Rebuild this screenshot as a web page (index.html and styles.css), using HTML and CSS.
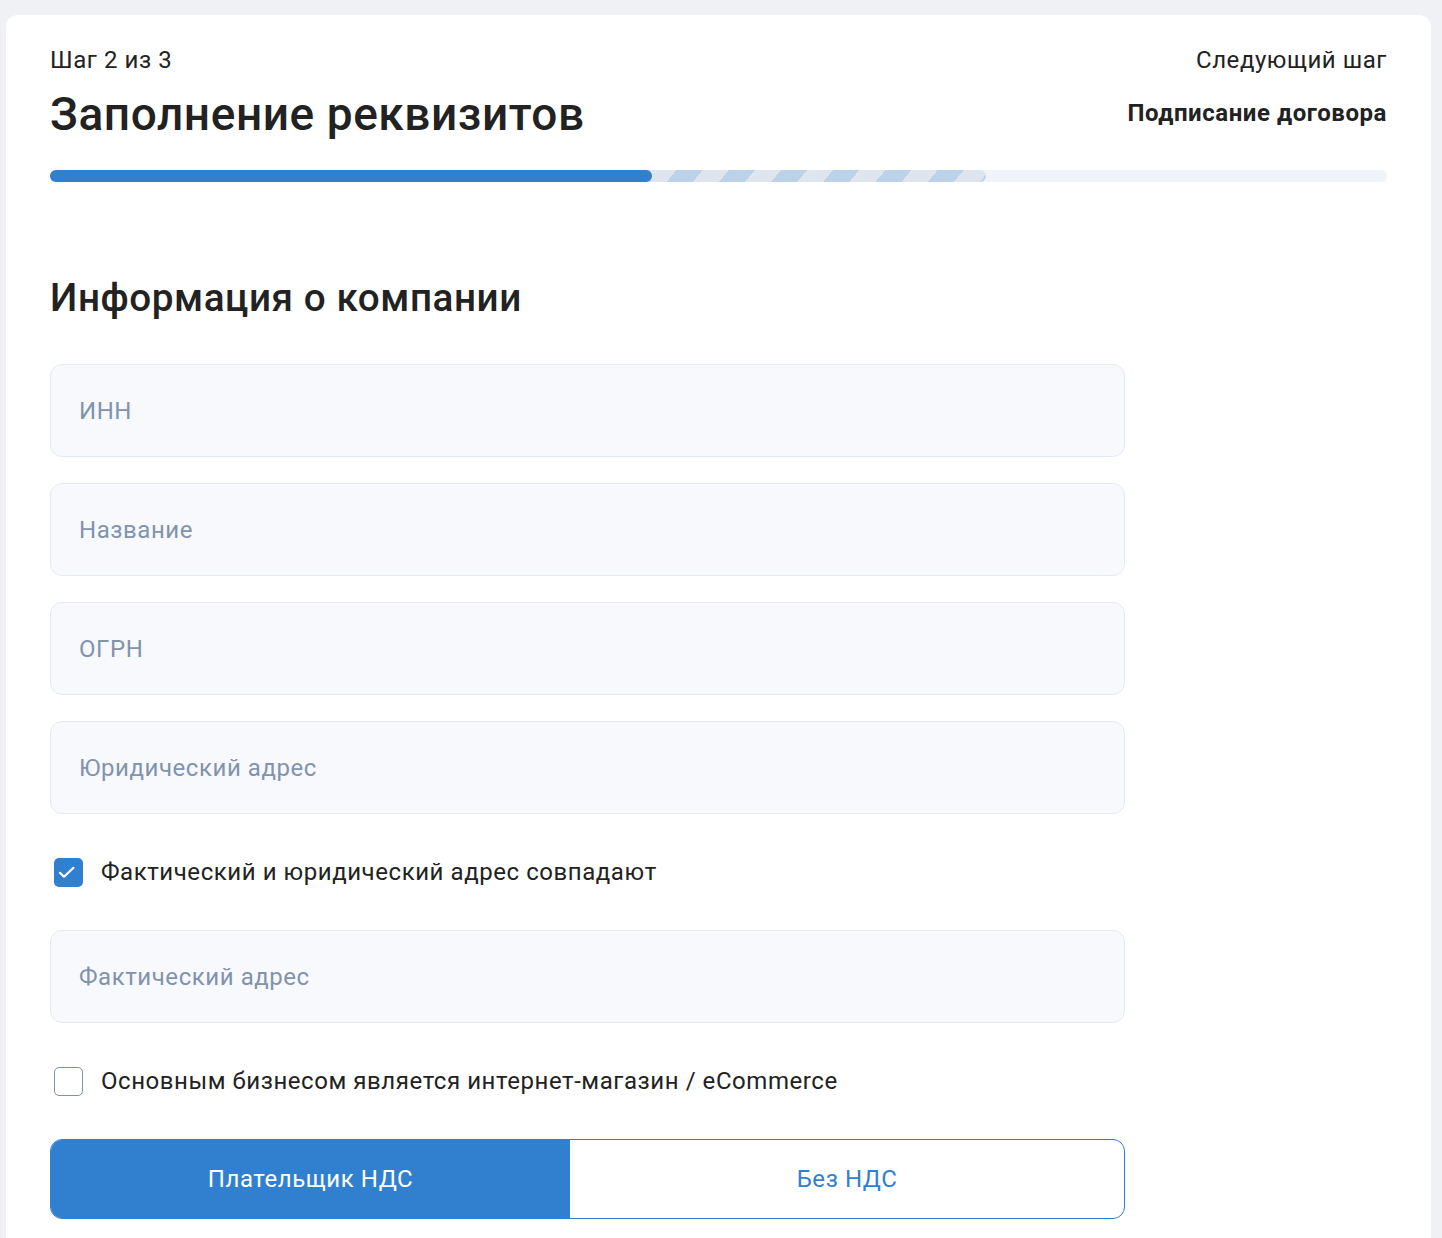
FILE: index.html
```html
<!DOCTYPE html>
<html lang="ru">
<head>
<meta charset="utf-8">
<title>Заполнение реквизитов</title>
<link rel="stylesheet" href="styles.css">
</head>
<body>
<div class="card">
  <div class="header">
    <div class="header-left">
      <div class="step">Шаг 2 из 3</div>
      <h1 class="title">Заполнение реквизитов</h1>
    </div>
    <div class="header-right">
      <div class="next-label">Следующий шаг</div>
      <div class="next-name">Подписание договора</div>
    </div>
  </div>
  <div class="progress">
    <div class="progress-current"></div>
    <div class="progress-done"></div>
  </div>

  <h2 class="section-title">Информация о компании</h2>

  <div class="form">
    <div class="field">ИНН</div>
    <div class="field">Название</div>
    <div class="field">ОГРН</div>
    <div class="field">Юридический адрес</div>
    <div class="check">
      <span class="box box-checked">
        <svg viewBox="0 0 29 29" width="29" height="29"><path d="M6 14.8l4 3.9L19.5 9.8" fill="none" stroke="#fff" stroke-width="2.2" stroke-linecap="round" stroke-linejoin="round"/></svg>
      </span>
      <span class="check-text">Фактический и юридический адрес совпадают</span>
    </div>
    <div class="field">Фактический адрес</div>
    <div class="check">
      <span class="box"></span>
      <span class="check-text">Основным бизнесом является интернет-магазин / eCommerce</span>
    </div>
    <div class="segmented">
      <div class="seg seg-active">Плательщик НДС</div>
      <div class="seg">Без НДС</div>
    </div>
  </div>
</div>
</body>
</html>
```

FILE: styles.css
```css
* { box-sizing: border-box; }
html, body { margin: 0; padding: 0; }
body {
  background: #eff1f5;
  font-family: Roboto, "Noto Sans", Arial, sans-serif;
  color: #222222;
  letter-spacing: 0.035em;
}
.card {
  margin: 15px 11px 0 6px;
  background: #ffffff;
  border-radius: 12px 12px 0 0;
  padding: 31px 44px 20px 44px;
}
.header {
  display: flex;
  justify-content: space-between;
  align-items: flex-start;
}
.step {
  font-size: 24px;
  line-height: 28px;
}
.title {
  margin: 13px 0 0 0;
  font-size: 46px;
  line-height: 54px;
  font-weight: 500;
}
.header-right {
  text-align: right;
}
.next-label {
  font-size: 24px;
  line-height: 28px;
}
.next-name {
  margin-top: 25px;
  font-size: 24px;
  line-height: 28px;
  font-weight: 700;
}
.progress {
  margin-top: 29px;
  height: 12px;
  border-radius: 6px;
  background: #f0f4f9;
  position: relative;
}
.progress-done {
  position: absolute;
  left: 0;
  top: 0;
  bottom: 0;
  width: 602px;
  background: #3180d0;
  border-radius: 6px;
}
.progress-current {
  position: absolute;
  left: 0;
  top: 0;
  bottom: 0;
  width: 936px;
  border-radius: 6px;
  background: repeating-linear-gradient(
    130deg,
    #bcd2e8 0,
    #bcd2e8 20px,
    #dfe5ee 20px,
    #dfe5ee 40px
  );
}
.section-title {
  margin: 93px 0 43px 0;
  font-size: 38.7px;
  line-height: 46px;
  font-weight: 500;
}
.form {
  display: flex;
  flex-direction: column;
  gap: 26px;
  width: 1075px;
}
.field {
  height: 93px;
  display: flex;
  align-items: center;
  padding-left: 28px;
  background: #f7f9fd;
  border: 1px solid #e4eaf5;
  border-radius: 12px;
  font-size: 24px;
  color: #8193ad;
}
.check {
  height: 64px;
  display: flex;
  align-items: center;
  gap: 18px;
  padding-left: 4px;
}
.box {
  width: 29px;
  height: 29px;
  border-radius: 5px;
  border: 1.5px solid #8191b3;
  background: #ffffff;
  display: flex;
  align-items: center;
  justify-content: center;
  flex: none;
  overflow: hidden;
}
.box-checked {
  background: #3180d0;
  border: none;
}
.check-text {
  font-size: 24px;
  color: #222222;
}
.segmented {
  height: 80px;
  display: flex;
  border: 1px solid #3180d0;
  border-radius: 12px;
  overflow: hidden;
}
.seg {
  display: flex;
  align-items: center;
  justify-content: center;
  font-size: 24px;
  color: #3180d0;
  flex: 1 1 555px;
}
.seg-active {
  flex: 0 0 519px;
  background: #3180d0;
  color: #ffffff;
}
```
